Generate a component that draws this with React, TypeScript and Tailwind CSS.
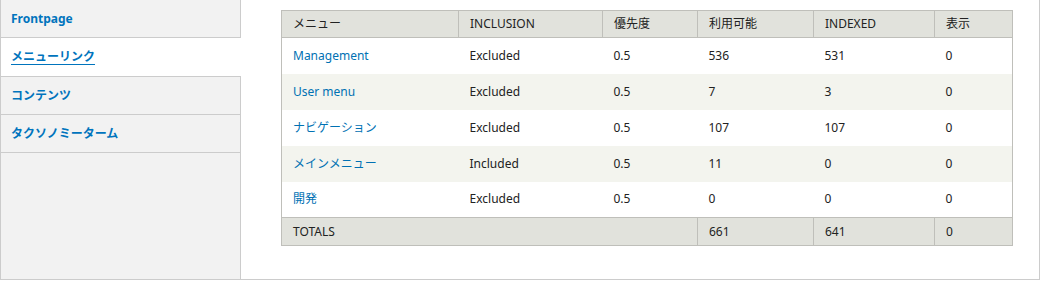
const tabs = [
  { label: 'Frontpage', h: 'h-[38px]' },
  { label: 'メニューリンク', h: 'h-[39px]', active: true },
  { label: 'コンテンツ', h: 'h-[38px]' },
  { label: 'タクソノミーターム', h: 'h-[38px]' },
];

const rows = [
  { name: 'Management', inclusion: 'Excluded', priority: '0.5', available: '536', indexed: '531', shown: '0' },
  { name: 'User menu', inclusion: 'Excluded', priority: '0.5', available: '7', indexed: '3', shown: '0' },
  { name: 'ナビゲーション', inclusion: 'Excluded', priority: '0.5', available: '107', indexed: '107', shown: '0' },
  { name: 'メインメニュー', inclusion: 'Included', priority: '0.5', available: '11', indexed: '0', shown: '0' },
  { name: '開発', inclusion: 'Excluded', priority: '0.5', available: '0', indexed: '0', shown: '0' },
];

const headers = ['メニュー', 'INCLUSION', '優先度', '利用可能', 'INDEXED', '表示'];

export default function App() {
  return (
    <div className="bg-white text-[12px] text-[#222] [font-family:'Noto_Sans','Noto_Sans_CJK_JP',sans-serif]">
      <div className="flex h-[280px] w-[1040px] border-x border-b border-[#ccc]">
        <div className="flex w-[240px] shrink-0 flex-col bg-[#f2f2f2]">
          {tabs.map((t) => (
            <div
              key={t.label}
              className={`flex ${t.h} shrink-0 items-center border-b border-[#ccc] pl-[10px] ${
                t.active ? 'bg-white' : 'border-r'
              }`}
            >
              <a
                href="#"
                className={`font-bold leading-none text-[#0074bd] ${t.active ? 'underline underline-offset-[3px]' : ''}`}
              >
                {t.label}
              </a>
            </div>
          ))}
          <div className="flex-1 border-r border-[#ccc]" />
        </div>

        <div className="flex-1 pl-[40px] pt-[10px]">
          <table className="w-[731px] table-fixed border-collapse border border-[#bfbfba]">
            <colgroup>
              <col className="w-[177px]" />
              <col className="w-[144px]" />
              <col className="w-[95px]" />
              <col className="w-[116px]" />
              <col className="w-[121px]" />
              <col className="w-[78px]" />
            </colgroup>
            <thead>
              <tr className="h-[27px] bg-[#e1e2dc]">
                {headers.map((h) => (
                  <th
                    key={h}
                    className="border border-[#bfbfba] py-0 pl-[11px] text-left font-normal text-[#222]"
                  >
                    {h}
                  </th>
                ))}
              </tr>
            </thead>
            <tbody>
              {rows.map((r, i) => (
                <tr key={r.name} className={`h-[36px] ${i % 2 === 1 ? 'bg-[#f3f4ee]' : 'bg-white'}`}>
                  <td className="pl-[11px]">
                    <a href="#" className="text-[#0071b3]">
                      {r.name}
                    </a>
                  </td>
                  <td className="pl-[11px]">{r.inclusion}</td>
                  <td className="pl-[11px]">{r.priority}</td>
                  <td className="pl-[11px]">{r.available}</td>
                  <td className="pl-[11px]">{r.indexed}</td>
                  <td className="pl-[11px]">{r.shown}</td>
                </tr>
              ))}
              <tr className="h-[28px] bg-[#e1e2dc]">
                <td colSpan={3} className="border border-[#bfbfba] pl-[11px]">
                  TOTALS
                </td>
                <td className="border border-[#bfbfba] pl-[11px]">661</td>
                <td className="border border-[#bfbfba] pl-[11px]">641</td>
                <td className="border border-[#bfbfba] pl-[11px]">0</td>
              </tr>
            </tbody>
          </table>
        </div>
      </div>
    </div>
  );
}
